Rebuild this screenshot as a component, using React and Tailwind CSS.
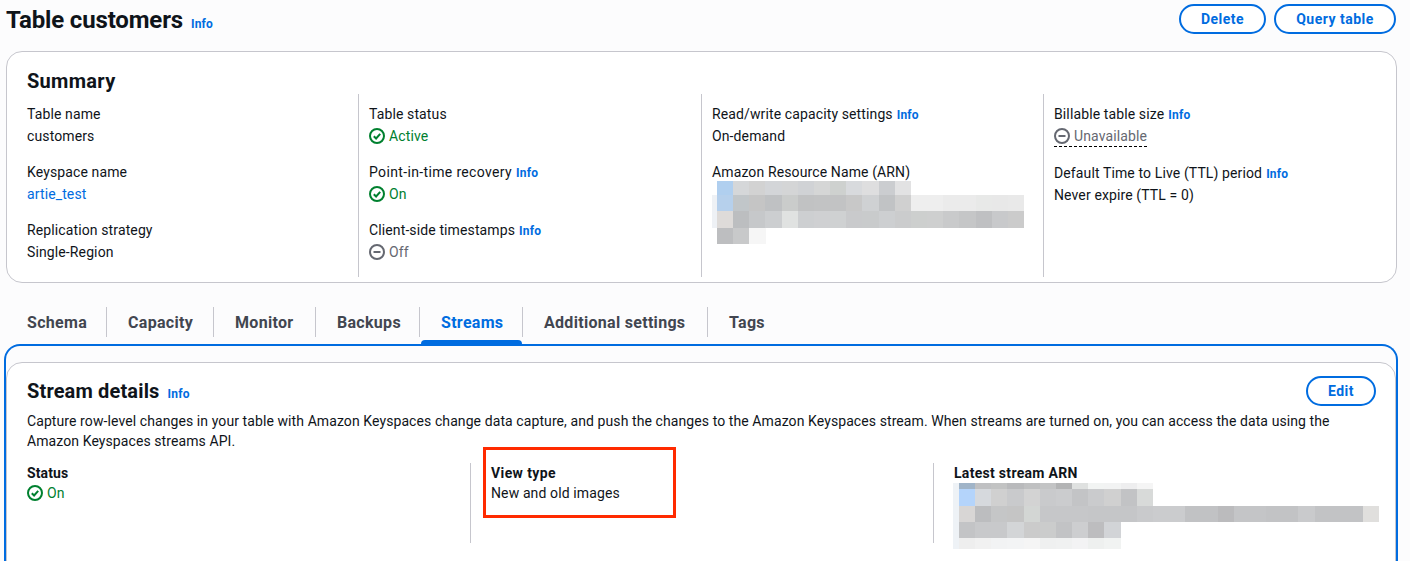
const summaryArn = [
  { y: 0, h: 14, cells: ["#b0cfef", "#d5d7d9", "#d2d2d2", "#d3d5d8", "#d4d5d6", "#d0d2d5", "#d5d6d6", "#ced1cf", "#d8dadd", "#dededf", "#cbcdd0", "#e2e2e3"] },
  { y: 14, h: 16, cells: ["#b6d0ec", "#c1c6c9", "#c5c5c5", "#bfc1c3", "#cacccb", "#c1c2c3", "#c2c3c4", "#c2c3c4", "#c8c8c8", "#cfd1d3", "#c1c3c5", "#d0d0d0", "#eeeeee", "#eeeeee", "#ebebeb", "#ebebeb", "#e8e9e8", "#e8e8e8", "#e9e9e9"] },
  { y: 30, h: 17, cells: ["#dedbd9", "#bcbec0", "#c6c8ca", "#ccced0", "#e0e2e1", "#cdcfd1", "#cfd0d2", "#cfd1d2", "#c9cacc", "#c9cbcc", "#cdcfd1", "#cbcccd", "#cdcfce", "#cecfcf", "#c9cacb", "#c5c6c7", "#bfc0c2", "#c8c9cb", "#cbcbcb"] },
  { y: 47, h: 16, cells: ["#bdbec0", "#c8c9ca", "#f6f6f6"] },
];

const streamArn = [
  { y: 0, h: 6, cells: ["#a0b4c8", "#bfc0c2", "#c2c3c3", "#b9babc", "#bfc0c1", "#c3c4c5", "#b3b4b5", "#dfe1e0", "#f2f4f3", "#f2f3f3", "#eeeeef", "#f5f5f5"] },
  { y: 6, h: 17, cells: ["#b4d4fb", "#d6d9dd", "#d0d0d0", "#c9cacc", "#d3d3d3", "#c9cacc", "#cbccce", "#c3c4c6", "#cacbcd", "#d0d0d0", "#c2c3c5", "#d8dad9"] },
  { y: 23, h: 16, cells: ["#d8d6d5", "#bcbdbf", "#c5c6c7", "#c5c5c5", "#d3d6d4", "#c6c7c9", "#c6c7c9", "#c6c7c9", "#c5c6c8", "#c5c6c8", "#c5c6c8", "#c9cacc", "#cbccce", "#cbccce", "#c1c2c4", "#c1c2c4", "#bbbbbd", "#c4c5c7", "#c4c5c7", "#c2c3c5", "#c2c3c5", "#c9cacc", "#c2c3c5", "#c2c3c5", "#c2c3c5", "#e0dfdd"] },
  { y: 39, h: 16, cells: ["#c3c4c6", "#c8c9cb", "#c8c9cb", "#d3d5d7", "#cbcbcb", "#cbcccc", "#c2c3c5", "#cdced0", "#bdbdbf", "#d2d4d7"] },
  { y: 55, h: 11, cells: ["#eeeeee", "#f1f1f1", "#f2f3f4", "#f3f4f5", "#f5f5f5", "#eff0f0", "#f0f1f1", "#f3f3f4", "#eef0ef", "#f1f3f2"] },
];

function Info({ className = "" }) {
  return <span className={`text-xs font-bold tracking-[0.2px] text-[#006ce0] ${className}`}>Info</span>;
}

function StatusIcon({ on }) {
  return (
    <svg width="16" height="16" viewBox="0 0 16 16" fill="none" stroke="currentColor" strokeWidth="2" aria-hidden="true">
      <circle cx="8" cy="8" r="7" />
      {on ? <path d="M4.8 8.2l2.3 2.3 4.1-4.6" /> : <path d="M4.5 8h7" />}
    </svg>
  );
}

function Status({ kind, label, dashed }) {
  const on = kind === "on";
  return (
    <div
      className={`flex h-[22px] items-center gap-1 ${on ? "text-[#00802f]" : "text-[#656871]"} ${dashed ? "w-fit border-b border-dashed border-black" : ""}`}
    >
      <StatusIcon on={on} />
      <span>{label}</span>
    </div>
  );
}

function Field({ label, info, children, className = "h-[58px]", labelClass = "" }) {
  return (
    <div className={className}>
      <div className="flex h-[22px] items-center gap-1">
        <span className={labelClass}>{label}</span>
        {info ? <Info className="mt-[2px]" /> : null}
      </div>
      {children}
    </div>
  );
}

function Button({ children, className = "" }) {
  return (
    <button className={`h-[30px] rounded-full border-2 border-[#006ce0] bg-white text-sm font-bold tracking-[0.5px] text-[#006ce0] ${className}`}>
      {children}
    </button>
  );
}

function Tab({ label, active, last, className = "" }) {
  return (
    <div className={`relative flex h-[30px] items-center ${className} ${last ? "" : "border-r border-[#c6c6cd]"} ${active ? "text-[#006ce0]" : "text-[#424650]"}`}>
      <span className="pt-[2px] pl-[21px] text-base font-bold tracking-[0.3px] whitespace-nowrap">{label}</span>
      {active ? <div className="absolute right-0 bottom-[-7px] left-[1px] h-1 rounded-t-sm bg-[#006ce0]" /> : null}
    </div>
  );
}

export default function App() {
  return (
    <div
      className="h-[561px] overflow-hidden bg-[#fcfcfd] text-sm tracking-[0.12px] text-[#0f141a]"
      style={{ fontFamily: "Roboto, sans-serif" }}
    >
      <header className="flex h-[51px] items-start justify-between pt-[5px] pr-[14px] pl-[6px]">
        <div className="flex items-baseline gap-2">
          <h1 className="text-2xl leading-[30px] font-bold tracking-[-0.15px]">Table customers</h1>
          <Info />
        </div>
        <div className="-mt-[1px] flex gap-2">
          <Button className="w-[87px]">Delete</Button>
          <Button className="w-[122px]">Query table</Button>
        </div>
      </header>

      <section className="mr-[13px] ml-[6px] h-[232px] rounded-2xl border border-[#c6c6cd] bg-white px-5 pt-4">
        <h2 className="text-xl leading-[26px] font-bold tracking-[0.3px]">Summary</h2>
        <div className="grid h-[178px] grid-cols-[332px_343px_342px_1fr]">
          <div className="border-r border-[#c6c6cd] pt-[9px]">
            <Field label="Table name"><div className="leading-[22px]">customers</div></Field>
            <Field label="Keyspace name"><div className="leading-[22px] text-[#006ce0]">artie_test</div></Field>
            <Field label="Replication strategy"><div className="leading-[22px]">Single-Region</div></Field>
          </div>
          <div className="border-r border-[#c6c6cd] pt-[9px] pl-[10px]">
            <Field label="Table status"><Status kind="on" label="Active" /></Field>
            <Field label="Point-in-time recovery" info labelClass="tracking-[0.35px]"><Status kind="on" label="On" /></Field>
            <Field label="Client-side timestamps" info><Status kind="off" label="Off" /></Field>
          </div>
          <div className="border-r border-[#c6c6cd] pt-[9px] pl-[10px]">
            <Field label="Read/write capacity settings" info><div className="leading-[22px]">On-demand</div></Field>
            <div className="flex h-[22px] items-center">Amazon Resource Name (ARN)</div>
            <svg width="320" height="63" className="-mt-[2px]" shapeRendering="crispEdges" aria-hidden="true">
              <rect x="0" y="14" width="5" height="33" fill="#eef1f5" />
              {summaryArn.map((row) =>
                row.cells.map((color, i) => (
                  <rect key={`${row.y}-${i}`} x={5 + i * 16.16} y={row.y} width="16.2" height={row.h} fill={color} />
                )),
              )}
            </svg>
          </div>
          <div className="pt-[9px] pl-[10px]">
            <Field label="Billable table size" info className="h-[59px]"><Status kind="off" label="Unavailable" dashed /></Field>
            <Field label="Default Time to Live (TTL) period" info><div className="leading-[22px]">Never expire (TTL = 0)</div></Field>
          </div>
        </div>
      </section>

      <nav className="mt-6 flex pl-[6px]">
        <Tab label="Schema" className="w-[101px]" />
        <Tab label="Capacity" className="w-[107px]" />
        <Tab label="Monitor" className="w-[102px]" />
        <Tab label="Backups" className="w-[104px]" />
        <Tab label="Streams" active className="w-[103px]" />
        <Tab label="Additional settings" className="w-[185px]" />
        <Tab label="Tags" last />
      </nav>

      <div className="mt-[7px] mr-3 ml-1 h-[260px] rounded-t-2xl border-2 border-b-0 border-[#006ce0] pt-4">
        <section className="relative h-[240px] rounded-t-2xl border border-[#c6c6cd] bg-white pt-[13px] pr-[19px] pl-5">
          <div className="flex items-start justify-between">
            <div className="flex items-baseline gap-2 pt-[2px]">
              <h2 className="text-xl leading-[26px] font-bold tracking-[0.15px]">Stream details</h2>
              <Info />
            </div>
            <Button className="w-[70px]">Edit</Button>
          </div>
          <p className="mt-[5px] pr-px leading-5 tracking-[0.09px]">
            Capture row-level changes in your table with Amazon Keyspaces change data capture, and push the changes to the Amazon Keyspaces stream. When streams are turned on, you can access the data using the Amazon Keyspaces streams API.
          </p>
          <div className="mt-3 grid grid-cols-[444px_463px_1fr] grid-rows-[80px]">
            <div className="border-r border-[#c6c6cd]">
              <div className="leading-5 font-bold">Status</div>
              <div className="[&>div]:h-5"><Status kind="on" label="On" /></div>
            </div>
            <div className="border-r border-[#c6c6cd] pl-5">
              <div className="leading-5 font-bold tracking-[0.4px]">View type</div>
              <div className="leading-5">New and old images</div>
            </div>
            <div className="pl-5">
              <div className="leading-5 font-bold tracking-[0.3px]">Latest stream ARN</div>
              <svg width="428" height="66" className="-ml-[1px]" shapeRendering="crispEdges" aria-hidden="true">
                <rect x="0" y="0" width="6" height="66" fill="#eef2f6" />
                {streamArn.map((row) =>
                  row.cells.map((color, i) => (
                    <rect key={`${row.y}-${i}`} x={6 + i * 16.16} y={row.y} width="16.2" height={row.h} fill={color} />
                  )),
                )}
              </svg>
            </div>
          </div>
          <div className="absolute top-[84px] left-[476px] h-[71px] w-[193px] border-[3px] border-[#ff2a00]" />
        </section>
      </div>
    </div>
  );
}
